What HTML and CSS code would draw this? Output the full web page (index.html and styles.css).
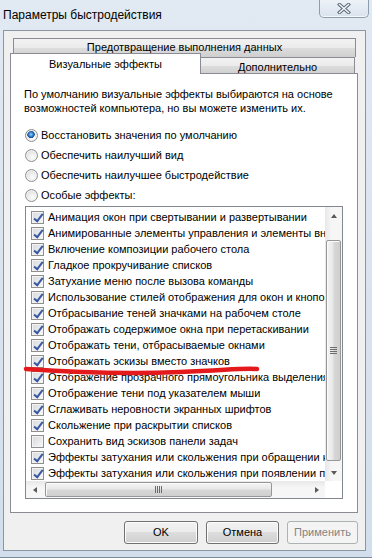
FILE: index.html
```html
<!DOCTYPE html>
<html lang="ru">
  <head>
    <meta charset="UTF-8" />
    <title>Параметры быстродействия</title>
    <link rel="stylesheet" href="styles.css">
  </head>
  <body>
    <div class="window">
      <div class="titlebar">
        <span class="title">Параметры быстродействия</span>
        <div class="close">
          <svg width="14" height="11" viewBox="0 0 14 11">
            <path d="M2.5 1.5 L11.5 9.5 M11.5 1.5 L2.5 9.5" stroke="#5b6675" stroke-width="3.4" stroke-linecap="square" fill="none"/>
            <path d="M2.5 1.5 L11.5 9.5 M11.5 1.5 L2.5 9.5" stroke="#f4f7fa" stroke-width="1.5" stroke-linecap="square" fill="none"/>
          </svg>
        </div>
      </div>

      <div class="client">
        <div class="tabs">
          <div class="tab-row">
            <div class="tab tab-back">Предотвращение выполнения данных</div>
          </div>
          <div class="tab-row tab-row-front">
            <div class="tab tab-active">Визуальные эффекты</div>
            <div class="tab tab-side">Дополнительно</div>
          </div>
        </div>

        <div class="panel">
          <p class="intro">По умолчанию визуальные эффекты выбираются на основе возможностей компьютера, но вы можете изменить их.</p>

          <div class="radios">
            <div class="radio-row"><span class="radio radio-on"></span>Восстановить значения по умолчанию</div>
            <div class="radio-row"><span class="radio"></span>Обеспечить наилучший вид</div>
            <div class="radio-row"><span class="radio"></span>Обеспечить наилучшее быстродействие</div>
            <div class="radio-row"><span class="radio"></span>Особые эффекты:</div>
          </div>

          <div class="listbox">
            <div class="items">
              <div class="item"><span class="check on"></span>Анимация окон при свертывании и развертывании</div>
              <div class="item"><span class="check on"></span>Анимированные элементы управления и элементы внутри окна</div>
              <div class="item"><span class="check on"></span>Включение композиции рабочего стола</div>
              <div class="item"><span class="check on"></span>Гладкое прокручивание списков</div>
              <div class="item"><span class="check on"></span>Затухание меню после вызова команды</div>
              <div class="item"><span class="check on"></span>Использование стилей отображения для окон и кнопок</div>
              <div class="item"><span class="check on"></span>Отбрасывание теней значками на рабочем столе</div>
              <div class="item"><span class="check on"></span>Отображать содержимое окна при перетаскивании</div>
              <div class="item"><span class="check on"></span>Отображать тени, отбрасываемые окнами</div>
              <div class="item"><span class="check on"></span>Отображать эскизы вместо значков</div>
              <div class="item"><span class="check on"></span>Отображение прозрачного прямоугольника выделения</div>
              <div class="item"><span class="check on"></span>Отображение тени под указателем мыши</div>
              <div class="item"><span class="check on"></span>Сглаживать неровности экранных шрифтов</div>
              <div class="item"><span class="check on"></span>Скольжение при раскрытии списков</div>
              <div class="item"><span class="check"></span>Сохранить вид эскизов панели задач</div>
              <div class="item"><span class="check on"></span>Эффекты затухания или скольжения при обращении к меню</div>
              <div class="item"><span class="check on"></span>Эффекты затухания или скольжения при появлении подсказок</div>
            </div>

            <div class="vscroll">
              <span class="arrow arrow-up"></span>
              <span class="vthumb"><span class="grip-v"></span></span>
              <span class="arrow arrow-down"></span>
            </div>

            <div class="hscroll">
              <span class="arrow arrow-left"></span>
              <span class="hthumb"><span class="grip-h"></span></span>
              <span class="arrow arrow-right"></span>
            </div>

            <div class="corner"></div>
          </div>
        </div>

        <div class="buttons">
          <div class="btn btn-ok">OK</div>
          <div class="btn btn-cancel">Отмена</div>
          <div class="btn btn-apply btn-disabled">Применить</div>
        </div>
      </div>
    </div>

    <svg class="scribble" width="372" height="558" viewBox="0 0 372 558">
      <path d="M26 369 C 70 372, 130 374, 180 372 S 240 368, 257 369" stroke="#e3191b" stroke-width="4.5" stroke-linecap="round" fill="none"/>
    </svg>
  </body>
</html>
```

FILE: styles.css
```css
:root {
  --client: #f0f0f0;
  --edge: #898c95;
  --text: #000000;
}

* {
  box-sizing: border-box;
}

html,
body {
  margin: 0;
  height: 100%;
}

body {
  position: relative;
  width: 372px;
  height: 558px;
  overflow: hidden;
  font-family: "Liberation Sans", Arial, sans-serif;
  font-size: 11px;
  color: var(--text);
  background: linear-gradient(#e1e9f3, #d2deeb);
}

.window {
  display: flex;
  flex-direction: column;
  height: 100%;
  border-bottom: 1px solid #7d8a98;
}

/* title bar */

.titlebar {
  display: flex;
  justify-content: space-between;
  align-items: flex-start;
  height: 30px;
}

.title {
  padding: 8px 0 0 3px;
  font-size: 12px;
  line-height: 15px;
}

.close {
  display: flex;
  align-items: center;
  justify-content: center;
  width: 50px;
  height: 18px;
  margin-right: 3px;
  border: 1px solid #8f9cad;
  border-top: 0;
  border-radius: 0 0 5px 5px;
  background: linear-gradient(#edf2f8, #d9e2ed);
  box-shadow: inset 0 -1px 0 #f6f9fc;
}

/* client area */

.client {
  display: flex;
  flex-direction: column;
  margin: 0 6px 0 3px;
  padding: 7px 7px 6px 6px;
  border: 1px solid #8b96a3;
  background: var(--client);
}

.tabs {
  display: flex;
  flex-direction: column;
}

.tab-row {
  display: flex;
}

.tab-row-front {
  align-items: flex-end;
  margin-top: -4px;
  margin-bottom: -1px;
}

.tab {
  border: 1px solid var(--edge);
  border-bottom: 0;
  text-align: center;
  white-space: nowrap;
  background: linear-gradient(#f2f2f2 0%, #ebebeb 50%, #dddddd 50%, #cfcfcf 100%);
}

.tab-back {
  flex: 1;
  height: 19px;
  margin: 0 2px 0 3px;
  line-height: 17px;
}

.tab-active {
  position: relative;
  z-index: 1;
  width: 191px;
  height: 21px;
  line-height: 20px;
  background: #ffffff;
}

.tab-side {
  width: 155px;
  height: 17px;
  margin-left: -1px;
  padding-top: 2px;
  line-height: 15px;
}

.panel {
  display: flex;
  flex-direction: column;
  padding: 13px 14px 13px 13px;
  border: 1px solid var(--edge);
  background: #ffffff;
}

.intro {
  margin: 0;
  line-height: 14px;
}

.radios {
  display: flex;
  flex-direction: column;
  margin-top: 10px;
}

.radio-row {
  display: flex;
  align-items: center;
  height: 20px;
  padding-left: 1px;
  line-height: 14px;
}

.radio {
  flex: none;
  width: 13px;
  height: 13px;
  margin-right: 3px;
  border: 1px solid #8e8f8f;
  border-radius: 50%;
  background: radial-gradient(circle at 60% 65%, #fdfdfd 0%, #e6e6e6 55%, #cfd0d2 100%);
  box-shadow: inset 0 0 0 1px #f3f3f3;
}

.radio-on {
  background:
    radial-gradient(circle at 45% 40%, #a8d4f6 0, #3a86cf 2px, #174d97 3.5px, transparent 4px),
    radial-gradient(circle at 60% 65%, #fdfdfd 0%, #e6e6e6 55%, #cfd0d2 100%);
}

/* list box */

.listbox {
  display: grid;
  grid-template-columns: 1fr 17px;
  grid-template-rows: 1fr 17px;
  height: 293px;
  margin: 1px 0 0 1px;
  border: 1px solid #828790;
  background: #ffffff;
}

.items {
  padding: 2px 0 0 5px;
  overflow: hidden;
}

.item {
  display: flex;
  align-items: center;
  height: 16px;
  white-space: nowrap;
  line-height: 14px;
}

.check {
  position: relative;
  flex: none;
  width: 13px;
  height: 13px;
  margin-right: 4px;
  border: 1px solid #8e8f8f;
  background: linear-gradient(135deg, #d6d8dc, #f8f8f8);
  box-shadow: inset 0 0 0 1px #f4f4f4;
}

.check.on::after {
  content: '';
  position: absolute;
  left: 4px;
  top: 0px;
  width: 3px;
  height: 8px;
  border-right: 2px solid #3a57a0;
  border-bottom: 2px solid #3a57a0;
  transform: rotate(38deg);
}

.vscroll {
  display: flex;
  flex-direction: column;
  align-items: center;
  background: linear-gradient(to right, #e8e8e8, #f6f6f6 40%, #f6f6f6);
}

.hscroll {
  display: flex;
  align-items: center;
  background: linear-gradient(#e8e8e8, #f6f6f6 40%, #f6f6f6);
}

.corner {
  background: #ffffff;
}

.arrow {
  flex: none;
  display: flex;
  align-items: center;
  justify-content: center;
  width: 17px;
  height: 17px;
}

.arrow::before {
  content: '';
  border: 3.5px solid transparent;
}

.arrow-up::before {
  border-top: 0;
  border-bottom: 4px solid #5a5a5a;
}

.arrow-down::before {
  border-bottom: 0;
  border-top: 4px solid #5a5a5a;
}

.arrow-left::before {
  border-left: 0;
  border-right: 4px solid #5a5a5a;
}

.arrow-right::before {
  border-right: 0;
  border-left: 4px solid #5a5a5a;
}

.arrow-down {
  margin-top: auto;
}

.arrow-right {
  margin-left: auto;
}

.vthumb,
.hthumb {
  display: flex;
  align-items: center;
  justify-content: center;
  border: 1px solid #979797;
  border-radius: 2px;
}

.vthumb {
  width: 15px;
  height: 221px;
  margin-top: 16px;
  background: linear-gradient(to right, #f4f4f4, #e8e8e8 45%, #d7d7d7 55%, #cfcfcf);
  box-shadow: inset 1px 1px 0 #fbfbfb;
}

.hthumb {
  width: 227px;
  height: 15px;
  margin-left: 2px;
  background: linear-gradient(#f4f4f4, #e8e8e8 45%, #d7d7d7 55%, #cfcfcf);
  box-shadow: inset 1px 1px 0 #fbfbfb;
}

.grip-v {
  width: 7px;
  height: 7px;
  background: repeating-linear-gradient(#6d6d6d 0 1px, transparent 1px 2px);
}

.grip-h {
  width: 7px;
  height: 7px;
  background: repeating-linear-gradient(to right, #6d6d6d 0 1px, transparent 1px 2px);
}

/* buttons */

.buttons {
  display: flex;
  justify-content: flex-end;
  gap: 8px;
  margin-top: 8px;
}

.btn {
  height: 23px;
  border: 1px solid #707070;
  border-radius: 3px;
  text-align: center;
  line-height: 21px;
  background: linear-gradient(#f2f2f2 0%, #ebebeb 50%, #dddddd 50%, #cfcfcf 100%);
  box-shadow: inset 0 0 0 1px #fcfcfc;
}

.btn-ok {
  width: 74px;
}

.btn-cancel {
  width: 73px;
}

.btn-apply {
  width: 71px;
}

.btn-disabled {
  border-color: #adb2b5;
  color: #838383;
  background: #f4f4f4;
  box-shadow: none;
}

.scribble {
  position: absolute;
  top: 0;
  left: 0;
  pointer-events: none;
}
```
